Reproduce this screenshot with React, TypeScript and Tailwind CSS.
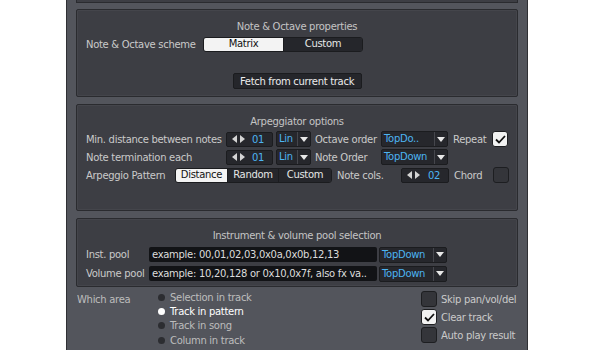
import React from 'react'

const font = { fontFamily: '"DejaVu Sans", "Liberation Sans", sans-serif' }

function Tri({ dir }: { dir: 'l' | 'r' | 'd' }) {
  if (dir === 'd') {
    return (
      <svg width="8" height="5" viewBox="0 0 8 5">
        <path d="M0 0 L8 0 L4 5 Z" fill="#e8e8e8" />
      </svg>
    )
  }
  return (
    <svg width="5" height="8" viewBox="0 0 5 8">
      <path d={dir === 'l' ? 'M5 0 L5 8 L0 4 Z' : 'M0 0 L0 8 L5 4 Z'} fill="#d4d4d4" />
    </svg>
  )
}

function Spinner({ value, w }: { value: string; w: string }) {
  return (
    <div className={`${w} h-[15px] flex items-center bg-[#26272c] border border-[#1b1c1f] rounded-[2px] pl-[5px] gap-[3px]`}>
      <Tri dir="l" />
      <Tri dir="r" />
      <span className="ml-auto mr-[8px] text-[#4cb4f2]">{value}</span>
    </div>
  )
}

function Dropdown({ value, w }: { value: string; w: string }) {
  return (
    <div className={`${w} h-[16px] flex items-stretch bg-[#26272c] border border-[#1b1c1f] rounded-[2px]`}>
      <span className="flex-1 pl-[2px] leading-[14px] text-[#4cb4f2] overflow-hidden whitespace-nowrap">{value}</span>
      <span className="w-[13px] flex items-center justify-center border-l border-[#45464c]">
        <Tri dir="d" />
      </span>
    </div>
  )
}

function Check({ on }: { on?: boolean }) {
  return (
    <div className={`w-[16px] h-[16px] rounded-[3px] border border-[#1d1e21] flex items-center justify-center ${on ? 'bg-[#f2f2f2]' : 'bg-[#34353a]'}`}>
      {on && (
        <svg width="11" height="9" viewBox="0 0 11 9">
          <path d="M1 4.5 L4 7.5 L10 1" stroke="#111" strokeWidth="1.8" fill="none" />
        </svg>
      )}
    </div>
  )
}

function Segmented({ items, widths, active }: { items: string[]; widths: string[]; active: number }) {
  return (
    <div className="flex h-[15px] border border-[#1b1c1f] rounded-[3px] overflow-hidden">
      {items.map((it, i) => (
        <div
          key={it}
          className={`${widths[i]} flex items-center justify-center leading-none ${i > 0 ? 'border-l border-[#1b1c1f]' : ''} ${i === active ? 'bg-[#f3f3f3] text-[#111]' : 'bg-[#25262b] text-[#e6e6e6]'}`}
        >
          {it}
        </div>
      ))}
    </div>
  )
}

function Panel({ title, children, h }: { title: string; children: React.ReactNode; h: string }) {
  return (
    <div className={`${h} bg-[#3d3e44] border border-[#2a2b2f] rounded-[2px] shadow-[inset_0_0_0_1px_#44454b]`}>
      <div className="text-center text-[#c4c4c4] leading-[12px] pt-[11px]">{title}</div>
      {children}
    </div>
  )
}

export default function App() {
  return (
    <div className="w-[600px] h-[350px] bg-white overflow-hidden text-[10px] tracking-[-0.3px] text-[#cacaca]" style={font}>
      <div className="ml-[66px] w-[462px] h-full bg-[#53555c] border-l border-r border-[#2f3034] px-[9px]">
        <div className="h-[3px] bg-[#3d3e44] border-x border-b border-[#2a2b2f]" />

        {/* Note & Octave */}
        <div className="mt-[6px]">
          <Panel title="Note & Octave properties" h="h-[88px]">
            <div className="flex items-center mt-[3px] pl-[9px] h-[16px]">
              <span className="w-[117px] whitespace-nowrap">Note &amp; Octave scheme</span>
              <Segmented items={['Matrix', 'Custom']} widths={['w-[79px]', 'w-[79px]']} active={0} />
            </div>
            <div className="flex justify-center mt-[21px]">
              <div className="w-[129px] h-[16px] bg-[#25262b] border border-[#1b1c1f] rounded-[2px] text-[#ececec] flex items-center justify-center whitespace-nowrap">
                Fetch from current track
              </div>
            </div>
          </Panel>
        </div>

        {/* Arpeggiator */}
        <div className="mt-[7px]">
          <Panel title="Arpeggiator options" h="h-[107px]">
            <div className="pl-[9px] mt-[3px] flex flex-col gap-[2px]">
              <div className="flex items-center h-[16px]">
                <span className="w-[140px] whitespace-nowrap">Min. distance between notes</span>
                <Spinner value="01" w="w-[47px]" />
                <div className="ml-[3px]"><Dropdown value="Lin" w="w-[35px]" /></div>
                <span className="ml-[4px] w-[66px] whitespace-nowrap">Octave order</span>
                <Dropdown value="TopDo.." w="w-[67px]" />
                <span className="ml-[5px] w-[39px]">Repeat</span>
                <Check on />
              </div>
              <div className="flex items-center h-[16px]">
                <span className="w-[140px]">Note termination each</span>
                <Spinner value="01" w="w-[47px]" />
                <div className="ml-[3px]"><Dropdown value="Lin" w="w-[35px]" /></div>
                <span className="ml-[4px] w-[66px]">Note Order</span>
                <Dropdown value="TopDown" w="w-[67px]" />
              </div>
              <div className="flex items-center h-[16px]">
                <span className="w-[89px] whitespace-nowrap">Arpeggio Pattern</span>
                <Segmented items={['Distance', 'Random', 'Custom']} widths={['w-[51px]', 'w-[51px]', 'w-[53px]']} active={0} />
                <span className="ml-[5px] w-[64px]">Note cols.</span>
                <Spinner value="02" w="w-[48px]" />
                <span className="ml-[5px] w-[39px]">Chord</span>
                <Check />
              </div>
            </div>
          </Panel>
        </div>

        {/* Pools */}
        <div className="mt-[7px]">
          <Panel title="Instrument & volume pool selection" h="h-[69px]">
            <div className="pl-[9px] mt-[5px] flex flex-col gap-[4px]">
              <div className="flex items-center h-[15px]">
                <span className="w-[63px]">Inst. pool</span>
                <div className="w-[228px] h-[15px] bg-[#121316] rounded-[2px] pl-[3px] text-[#dcdcdc] leading-[15px] whitespace-nowrap overflow-hidden">
                  example: 00,01,02,03,0x0a,0x0b,12,13
                </div>
                <div className="ml-[2px]"><Dropdown value="TopDown" w="w-[68px]" /></div>
              </div>
              <div className="flex items-center h-[15px]">
                <span className="w-[63px] whitespace-nowrap">Volume pool</span>
                <div className="w-[228px] h-[15px] bg-[#121316] rounded-[2px] pl-[3px] text-[#dcdcdc] leading-[15px] whitespace-nowrap overflow-hidden">
                  example: 10,20,128 or 0x10,0x7f, also fx va..
                </div>
                <div className="ml-[2px]"><Dropdown value="TopDown" w="w-[68px]" /></div>
              </div>
            </div>
          </Panel>
        </div>

        {/* Which area */}
        <div className="flex mt-[3px] pl-[1px]">
          <span className="w-[81px] mt-[2px] text-[#bdbdbd]">Which area</span>
          <div className="flex flex-col">
            {['Selection in track', 'Track in pattern', 'Track in song', 'Column in track', 'Column in song'].map((t, i) => (
              <div key={t} className="flex items-center h-[14.3px] gap-[5px]">
                <span className={`w-[7px] h-[7px] rounded-full ${i === 1 ? 'bg-white' : 'bg-[#2c2d31]'}`} />
                <span className={i === 1 ? 'text-white' : 'text-[#bdbdbd]'}>{t}</span>
              </div>
            ))}
          </div>
          <div className="ml-auto flex flex-col gap-[2px] mt-[1px]">
            {[['Skip pan/vol/del', false], ['Clear track', true], ['Auto play result', false]].map(([t, on]) => (
              <div key={t as string} className="flex items-center gap-[4px] h-[16px]">
                <Check on={on as boolean} />
                <span className="w-[77px] whitespace-nowrap">{t as string}</span>
              </div>
            ))}
          </div>
        </div>
      </div>
    </div>
  )
}
